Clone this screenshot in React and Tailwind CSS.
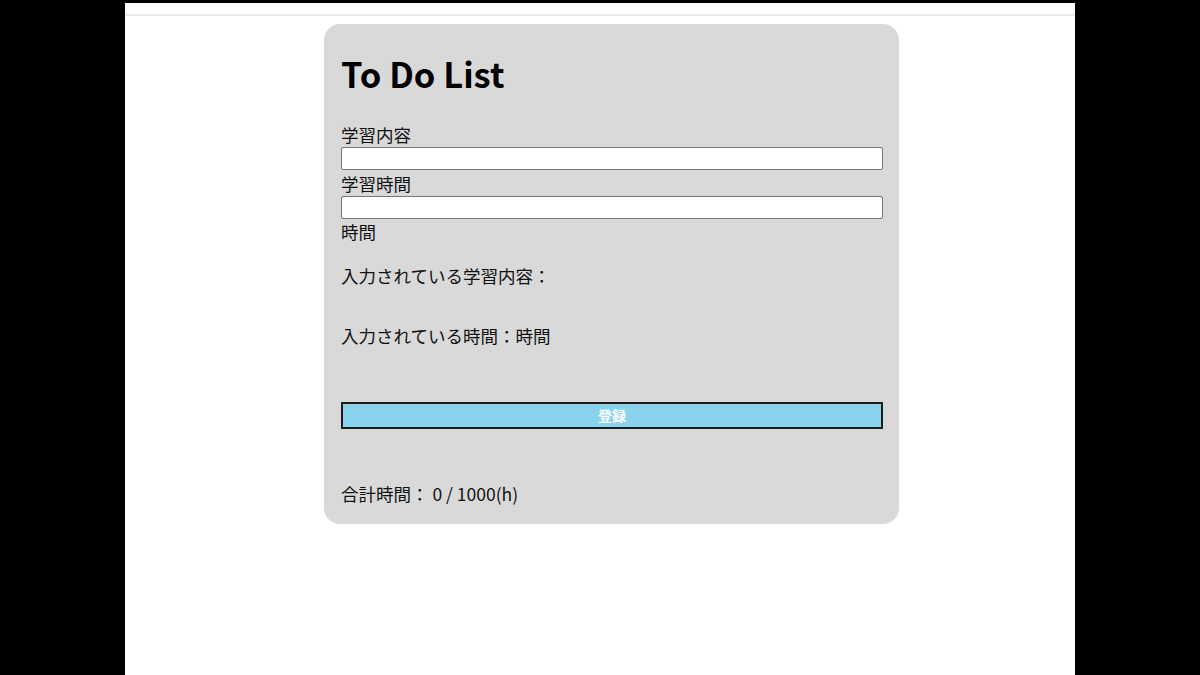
import React from 'react';

export default function App() {
  return (
    <div className="h-[675px] w-[1200px] bg-black pt-[3px] overflow-hidden" style={{ fontFamily: '"Noto Sans CJK JP", "Noto Sans", sans-serif' }}>
      <div className="ml-[125px] h-full w-[950px] bg-white">
        <div className="h-[13px] border-b-2 border-[#ececec]" />
        <div className="ml-[199px] mt-[8px] w-[575px] rounded-[16px] bg-[#d9d9d9] px-[17px] pt-[22px] pb-[19px] text-[17.5px] leading-[23px] text-[#111]">
          <h1 className="text-[34.5px] font-bold leading-[54px] text-black">To Do List</h1>
          <div className="mt-[23px] leading-[24px]">学習内容</div>
          <input type="text" className="block h-[23px] w-[542px] border border-[#767676] bg-white rounded-[2px]" />
          <div className="mt-[2px] leading-[24px]">学習時間</div>
          <input type="text" className="block h-[23px] w-[542px] border border-[#767676] bg-white rounded-[2px]" />
          <div className="mt-[1px]">時間</div>
          <p className="mt-[21px]">入力されている学習内容：</p>
          <p className="mt-[37px]">入力されている時間：時間</p>
          <button className="mt-[55px] block h-[27px] w-[542px] border-2 border-[#1a1a1a] bg-[#8ad3ec] text-[14px] font-bold text-white">
            登録
          </button>
          <p className="mt-[53px]">合計時間： 0 / 1000(h)</p>
        </div>
      </div>
    </div>
  );
}
